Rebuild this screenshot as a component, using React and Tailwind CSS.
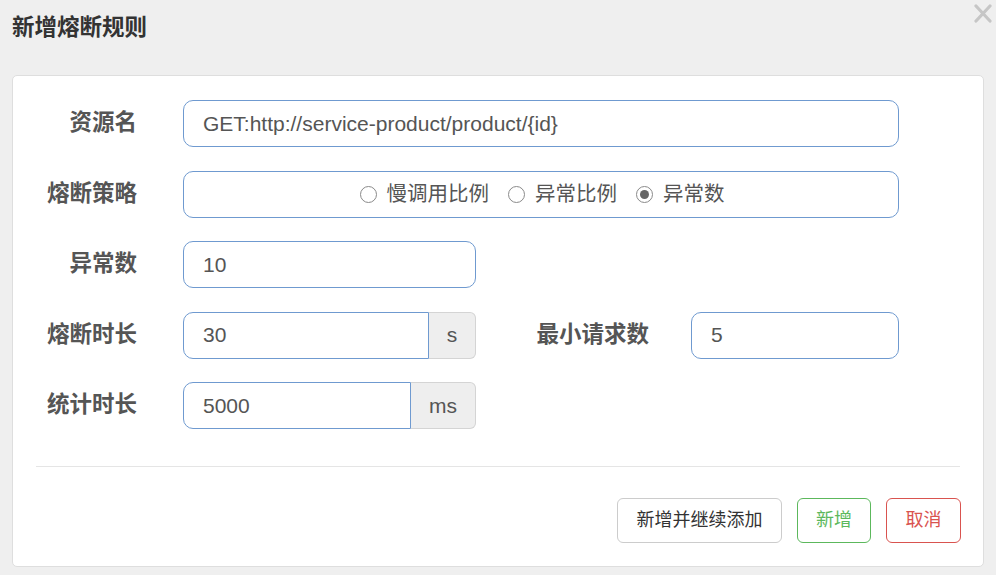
import React from 'react';

const font = { fontFamily: '"Liberation Sans", "Noto Sans CJK SC", sans-serif' };

const Label = ({ children, className = '' }) => (
  <label className={`text-[22.5px] font-bold text-[#555] text-right leading-none ${className}`}>
    {children}
  </label>
);

const Input = ({ value, className = '' }) => (
  <div
    className={`h-[47px] border border-[#6f9ad0] rounded-[10px] bg-white flex items-center pl-[19px] text-[21px] text-[#555] ${className}`}
  >
    {value}
  </div>
);

const AddonGroup = ({ value, unit, inputW }) => (
  <div className="flex w-[293px] h-[47px]">
    <div
      className="h-full border border-[#6f9ad0] rounded-l-[10px] bg-white flex items-center pl-[19px] text-[21px] text-[#555]"
      style={{ width: inputW }}
    >
      {value}
    </div>
    <div className="flex-1 h-full border border-l-0 border-[#d4d4d4] rounded-r-[6px] bg-[#eeeeee] flex items-center justify-center text-[21px] text-[#555]">
      {unit}
    </div>
  </div>
);

const Radio = ({ checked, label }) => (
  <span className="flex items-center gap-[10px]">
    <span className="w-[17px] h-[17px] rounded-full border-[1.5px] border-[#8a8a8a] flex items-center justify-center bg-white">
      {checked && <span className="w-[9px] h-[9px] rounded-full bg-[#666]" />}
    </span>
    <span className="text-[20.5px] text-[#555] leading-none">{label}</span>
  </span>
);

export default function App() {
  return (
    <div className="w-[996px] h-[575px] bg-[#efefef] relative overflow-hidden" style={font}>
      {/* close */}
      <button className="absolute right-[4px] top-[4px] w-[18px] h-[19px]" aria-label="close">
        <svg viewBox="0 0 18 19" className="w-full h-full" fill="none" stroke="#c6c6c6" strokeWidth="3.2" strokeLinecap="round">
          <path d="M2 2 L16 17 M16 2 L2 17" />
        </svg>
      </button>

      <div className="h-[75px] pl-[12px] pt-[17px]">
        <h3 className="text-[22.5px] font-bold text-[#333] leading-none">新增熔断规则</h3>
      </div>

      <div className="mx-[12px] h-[492px] bg-white border border-[#dedede] rounded-[5px] flex flex-col">
        <div className="flex flex-col gap-[23.5px] pt-[24px]">
          <div className="flex items-center">
            <Label className="w-[124px]">资源名</Label>
            <Input value="GET:http://service-product/product/{id}" className="ml-[46px] w-[716px]" />
          </div>

          <div className="flex items-center">
            <Label className="w-[124px]">熔断策略</Label>
            <div className="ml-[46px] w-[716px] h-[47px] border border-[#6f9ad0] rounded-[10px] flex items-center justify-center gap-[19px] pl-[2px]">
              <Radio label="慢调用比例" />
              <Radio label="异常比例" />
              <Radio checked label="异常数" />
            </div>
          </div>

          <div className="flex items-center">
            <Label className="w-[124px]">异常数</Label>
            <Input value="10" className="ml-[46px] w-[293px]" />
          </div>

          <div className="flex items-center">
            <Label className="w-[124px]">熔断时长</Label>
            <div className="ml-[46px]">
              <AddonGroup value="30" unit="s" inputW={246} />
            </div>
            <Label className="w-[173px]">最小请求数</Label>
            <Input value="5" className="ml-[42px] w-[208px]" />
          </div>

          <div className="flex items-center">
            <Label className="w-[124px]">统计时长</Label>
            <div className="ml-[46px]">
              <AddonGroup value="5000" unit="ms" inputW={228} />
            </div>
          </div>
        </div>

        <div className="mx-[23px] mt-[37px] border-t border-[#e5e5e5]" />

        <div className="flex justify-end gap-[15px] pr-[22px] pt-[31px]">
          <button className="h-[45px] w-[165px] border border-[#cccccc] rounded-[6px] bg-white text-[18px] text-[#333]">
            新增并继续添加
          </button>
          <button className="h-[45px] w-[74px] border border-[#5cb85c] rounded-[6px] bg-white text-[18px] text-[#5cb85c]">
            新增
          </button>
          <button className="h-[45px] w-[75px] border border-[#d9534f] rounded-[6px] bg-white text-[18px] text-[#d9534f]">
            取消
          </button>
        </div>
      </div>
    </div>
  );
}
